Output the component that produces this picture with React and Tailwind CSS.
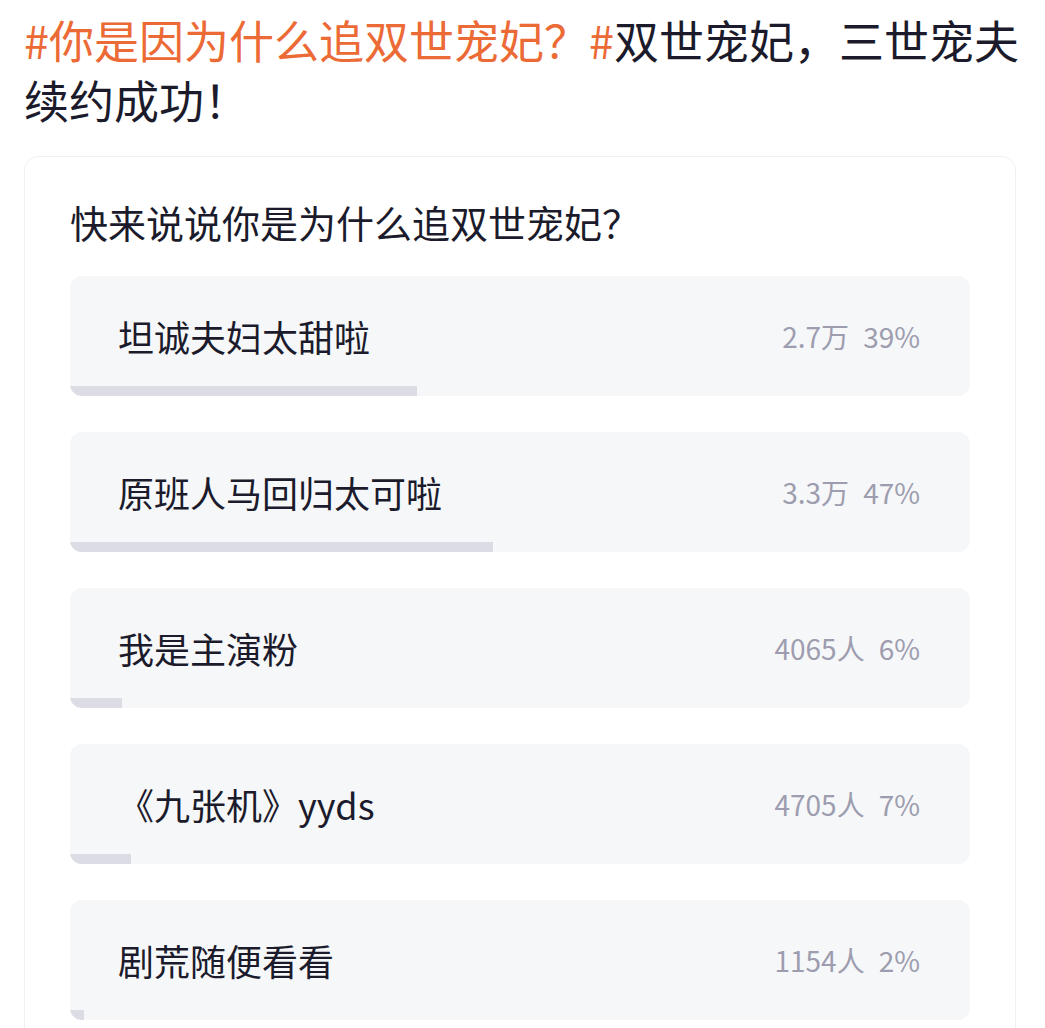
import React from 'react';

const options = [
  { label: '坦诚夫妇太甜啦', count: '2.7万', pct: 38.6, pctText: '39%' },
  { label: '原班人马回归太可啦', count: '3.3万', pct: 47, pctText: '47%' },
  { label: '我是主演粉', count: '4065人', pct: 5.8, pctText: '6%' },
  { label: '《九张机》yyds', count: '4705人', pct: 6.8, pctText: '7%' },
  { label: '剧荒随便看看', count: '1154人', pct: 1.6, pctText: '2%' },
];

const font = { fontFamily: '"Noto Sans CJK SC", "Noto Sans", sans-serif' };

const PollOption = ({ option }) => (
  <div className="flex flex-col h-[120px] rounded-[12px] bg-[#f6f7f9] overflow-hidden">
    <div className="flex-1 flex items-center justify-between pt-[10px] pl-[48px] pr-[50px]">
      <span className="text-[36px] leading-none text-[#1b1b2c]">{option.label}</span>
      <span className="flex gap-[14px] text-[28px] leading-none text-[#9d9daf]">
        <span>{option.count}</span>
        <span>{option.pctText}</span>
      </span>
    </div>
    <div className="h-[10px] bg-[#dcdce4]" style={{ width: option.pct + '%' }} />
  </div>
);

export default function App() {
  return (
    <div className="min-h-screen bg-white" style={font}>
      <div className="px-[24px] pt-[10px] text-[45px] leading-[60px] text-[#1b1b2c] [text-spacing-trim:space-all]">
        <span className="text-[#ec6a35]">#你是因为什么追双世宠妃？#</span>
        双世宠妃，三世宠夫续约成功！
      </div>

      <div className="ml-[24px] mr-[29px] mt-[26px] border border-[#f0f0f3] rounded-[14px] px-[45px] pt-[40px] pb-[20px]">
        <h2 className="text-[38px] leading-[50px] text-[#1b1b2c] [text-spacing-trim:space-all]">快来说说你是为什么追双世宠妃？</h2>
        <div className="mt-[29px] flex flex-col gap-[36px]">
          {options.map((o) => (
            <PollOption key={o.label} option={o} />
          ))}
        </div>
      </div>
    </div>
  );
}
